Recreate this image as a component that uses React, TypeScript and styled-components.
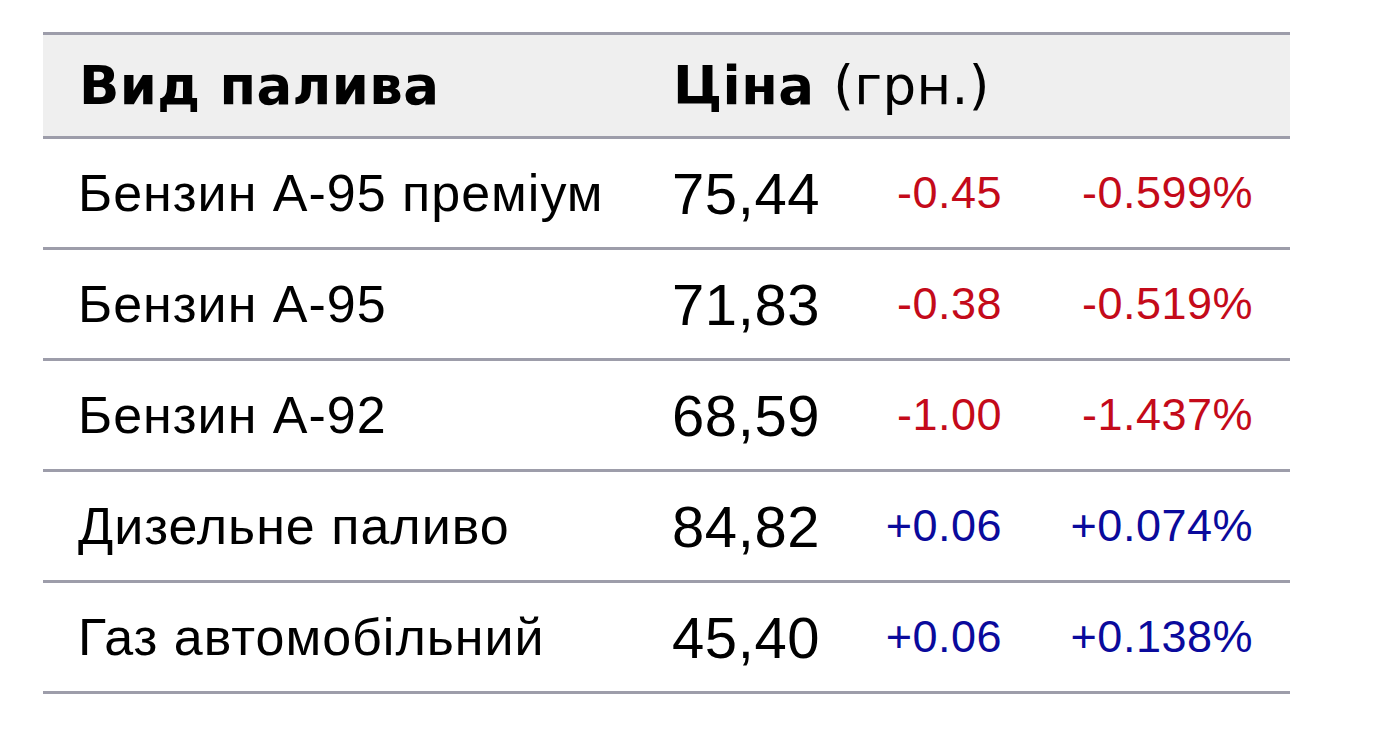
import React from "react";
import styled, { createGlobalStyle } from "styled-components";

const GlobalStyle = createGlobalStyle`
  html, body {
    margin: 0;
    padding: 0;
    background: #ffffff;
  }
  body {
    font-family: "Liberation Sans", Arial, sans-serif;
    color: #000;
  }
`;

const Page = styled.div`
  padding: 32px 0 0 43px;
`;

const Table = styled.table`
  width: 1247px;
  border-collapse: collapse;
  table-layout: fixed;
  border-top: 3px solid #9d9daa;
  font-family: "Liberation Sans", Arial, sans-serif;
`;

const HeadRow = styled.tr`
  background: #efefef;
  border-bottom: 3px solid #9d9daa;
`;

const HeadCell = styled.th`
  height: 101px;
  padding: 0 0 0 36px;
  text-align: left;
  font-family: "DejaVu Sans", Verdana, sans-serif;
  font-size: 53px;
  font-weight: bold;
  letter-spacing: 0.4px;
  vertical-align: middle;
`;

const Unit = styled.span`
  font-weight: normal;
`;

const Row = styled.tr`
  border-bottom: 3px solid #9d9daa;
`;

const NameCell = styled.td`
  height: 108px;
  padding: 0 0 0 35px;
  font-family: "Liberation Sans", Arial, sans-serif;
  font-size: 52px;
  letter-spacing: 1px;
  white-space: nowrap;
  vertical-align: middle;
`;

const PriceCell = styled.td`
  padding: 0 0 0 35px;
  font-family: "Liberation Sans", Arial, sans-serif;
  font-size: 58px;
  letter-spacing: 0.6px;
  vertical-align: middle;
`;

const DeltaCell = styled.td<{ $up: boolean; $pad: number }>`
  padding: 0 ${(p) => p.$pad}px 0 0;
  text-align: right;
  font-family: "Liberation Sans", Arial, sans-serif;
  font-size: 45px;
  letter-spacing: 0.5px;
  color: ${(p) => (p.$up ? "#0a0a9c" : "#c40a1a")};
  vertical-align: middle;
`;

const fuels = [
  { name: "Бензин А-95 преміум", price: "75,44", delta: "-0.45", pct: "-0.599%" },
  { name: "Бензин А-95", price: "71,83", delta: "-0.38", pct: "-0.519%" },
  { name: "Бензин А-92", price: "68,59", delta: "-1.00", pct: "-1.437%" },
  { name: "Дизельне паливо", price: "84,82", delta: "+0.06", pct: "+0.074%" },
  { name: "Газ автомобільний", price: "45,40", delta: "+0.06", pct: "+0.138%" },
];

export default function App() {
  return (
    <>
      <GlobalStyle />
      <Page>
        <Table>
          <colgroup>
            <col style={{ width: 594 }} />
            <col style={{ width: 200 }} />
            <col style={{ width: 200 }} />
            <col style={{ width: 253 }} />
          </colgroup>
          <thead>
            <HeadRow>
              <HeadCell>Вид палива</HeadCell>
              <HeadCell colSpan={3}>
                Ціна <Unit>(грн.)</Unit>
              </HeadCell>
            </HeadRow>
          </thead>
          <tbody>
            {fuels.map((f) => {
              const up = f.delta.startsWith("+");
              return (
                <Row key={f.name}>
                  <NameCell>{f.name}</NameCell>
                  <PriceCell>{f.price}</PriceCell>
                  <DeltaCell $up={up} $pad={35}>
                    {f.delta}
                  </DeltaCell>
                  <DeltaCell $up={up} $pad={37}>
                    {f.pct}
                  </DeltaCell>
                </Row>
              );
            })}
          </tbody>
        </Table>
      </Page>
    </>
  );
}
